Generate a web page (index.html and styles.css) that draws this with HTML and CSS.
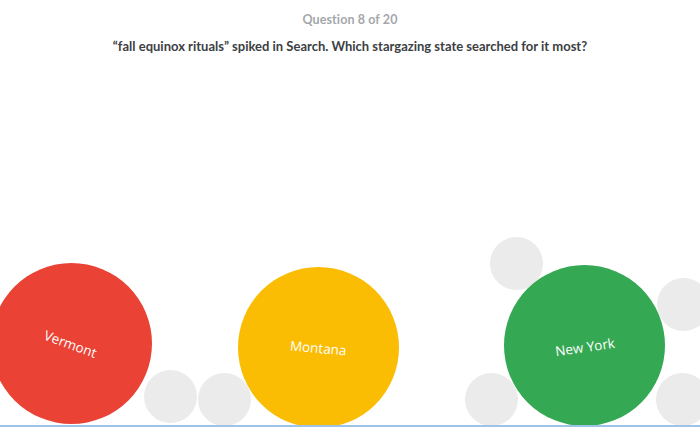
FILE: index.html
```html
<!DOCTYPE html>
<html lang="en">
<head>
    <meta charset="UTF-8">
    <title>Quiz</title>
    <link rel="stylesheet" href="styles.css">
</head>
<body>
    <!-- Question header -->
    <header class="quiz-header">
        <p class="counter">Question 8 of 20</p>
        <h1 class="question">“fall equinox rituals” spiked in Search. Which stargazing state searched for it most?</h1>
    </header>

    <!-- Bubble field -->
    <div class="bubbles">
        <div class="dot" style="left:144px; top:370px;"></div>
        <div class="dot" style="left:198px; top:373px;"></div>
        <div class="dot" style="left:490px; top:237px;"></div>
        <div class="dot" style="left:657px; top:278px;"></div>
        <div class="dot" style="left:465px; top:373px;"></div>
        <div class="dot" style="left:656px; top:373px;"></div>

        <div class="answer red" style="left:-9px; top:263px;"><span class="tilt-a">Vermont</span></div>
        <div class="answer yellow" style="left:238px; top:267px;"><span class="tilt-b">Montana</span></div>
        <div class="answer green" style="left:504px; top:265px;"><span class="tilt-c">New York</span></div>
    </div>

    <div class="bottom-line"></div>
</body>
</html>
```

FILE: styles.css
```css
/* Base */
body {
    margin: 0;
    width: 700px;
    height: 427px;
    overflow: hidden;
    background: #ffffff;
    font-family: "Open Sans", sans-serif;
    position: relative;
}

/* Header */
.quiz-header {
    display: flex;
    flex-direction: column;
    align-items: center;
    padding-top: 11px;
}

.counter {
    margin: 0;
    font-family: Lato, "Open Sans", sans-serif;
    font-size: 12.5px;
    font-weight: 700;
    color: #a4a7ab;
    line-height: 18px;
    letter-spacing: 0.1px;
}

.question {
    margin: 8px 0 0;
    font-family: Lato, "Open Sans", sans-serif;
    font-size: 13px;
    font-weight: 700;
    color: #3c4043;
    line-height: 18px;
}

/* Bubbles */
.bubbles {
    position: absolute;
    inset: 0;
}

.dot {
    position: absolute;
    width: 53px;
    height: 53px;
    border-radius: 50%;
    background: #ebebeb;
}

.answer {
    position: absolute;
    width: 161px;
    height: 161px;
    border-radius: 50%;
    display: flex;
    justify-content: center;
    align-items: center;
    color: #ffffff;
    font-size: 13.5px;
    font-family: "Open Sans", sans-serif;
}

.red { background: #ea4335; }
.yellow { background: #fbbc04; }
.green { background: #34a853; }

.tilt-a { transform: translate(-1px, 0) rotate(20deg); }
.tilt-b { transform: translate(0, 0) rotate(5deg); }
.tilt-c { transform: translate(0, 1px) rotate(-8deg); }

.bottom-line {
    position: absolute;
    left: 0;
    right: 0;
    bottom: 0;
    height: 2px;
    background: #9dc3e6;
}
```
